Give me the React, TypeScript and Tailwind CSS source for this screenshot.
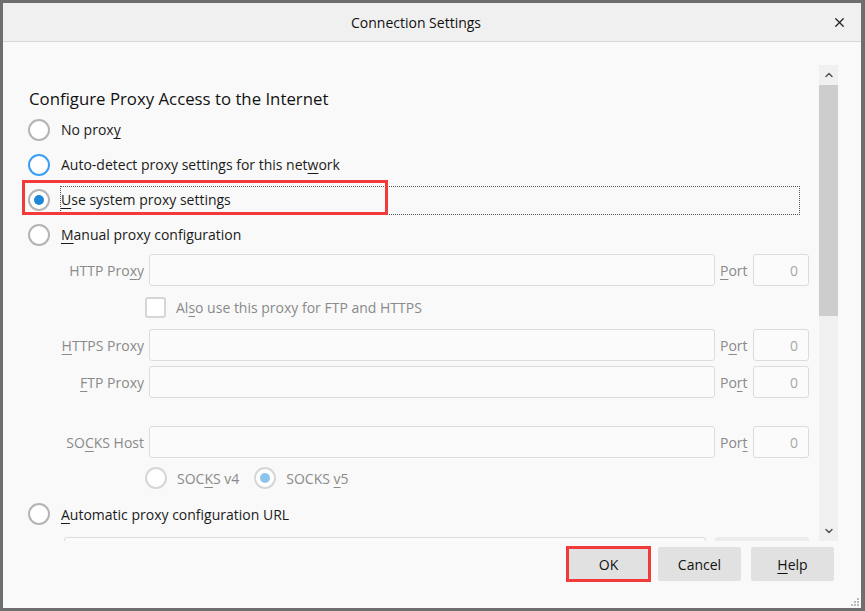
import { X, ChevronUp, ChevronDown } from "lucide-react"
import type { ReactNode } from "react"

const FONT = "font-['Open_Sans',sans-serif]"

// underlined access key letter
function K({ children }: { children: ReactNode }) {
    return <span className="underline decoration-1 underline-offset-[3px]">{children}</span>
}

function Radio({ checked, hover, disabled }: { checked?: boolean; hover?: boolean; disabled?: boolean }) {
    const ring = hover ? "border-[#3c9ff5]" : disabled ? "border-[#d6d6d6]" : "border-[#b4b4b4]"
    const dot = disabled ? "bg-[#8cc4ee]" : "bg-[#1e88d8]"
    return (
        <div className={`w-[22px] h-[22px] shrink-0 rounded-full border-2 bg-white flex items-center justify-center ${ring}`}>
            {checked && <div className={`w-[10px] h-[10px] rounded-full ${dot}`} />}
        </div>
    )
}

function Field({ label, port }: { label: ReactNode; port: ReactNode }) {
    return (
        <div className="flex items-center h-[32px]">
            <div className="w-[146px] text-right pr-[5px] text-[#8a8a8a]">{label}</div>
            <div className="w-[566px] h-[32px] rounded-[3px] border border-[#dcdcdc] bg-[#fbfbfb]" />
            <div className="w-[38px] pl-[5px] text-[#8a8a8a]">{port}</div>
            <div className="w-[56px] h-[32px] rounded-[3px] border border-[#dcdcdc] bg-[#fbfbfb] flex items-center justify-end pr-[10px] text-[#a8a8a8]">
                0
            </div>
        </div>
    )
}

const OPTIONS = [
    { id: "none", label: <>No prox<K>y</K></> },
    { id: "auto", label: <>Auto-detect proxy settings for this net<K>w</K>ork</>, hover: true },
    { id: "system", label: <><K>U</K>se system proxy settings</>, checked: true },
    { id: "manual", label: <><K>M</K>anual proxy configuration</> },
]

export default function App() {
    return (
        <div className={`w-[865px] h-[611px] bg-[#6e6e6e] pt-[3px] pl-[3px] pr-[4px] pb-[3px] ${FONT} text-[14px] text-[#1b1b1b]`}>
            <div className="w-full h-full bg-[#f9f9f9] flex flex-col relative">
                {/* Title bar */}
                <header className="h-[39px] shrink-0 bg-[#f0f0f0] border-b border-[#d8d8d8] flex items-center pr-[32px] relative">
                    <div className="flex-1 text-center text-[14px] text-[#111]">Connection Settings</div>
                    <X className="absolute right-[14px] top-[12px] w-[15px] h-[15px] text-[#222]" strokeWidth={2} />
                </header>

                {/* Body */}
                <div className="flex pt-[23px] pr-[23px] h-[499px] shrink-0">
                    <div className="flex-1 h-[476px] overflow-hidden">
                        <h1 className="mt-[23px] pl-[26px] text-[16.8px] leading-[22px] text-[#111]">Configure Proxy Access to the Internet</h1>

                        <div className="mt-[2px]">
                            {OPTIONS.map((o) => (
                                <div key={o.id} className="h-[35px] flex items-center pl-[25px] relative">
                                    <Radio checked={o.checked} hover={o.hover} />
                                    <span className="ml-[11px]">{o.label}</span>
                                    {o.checked && (
                                        <>
                                            <div className="absolute left-[57px] top-[4px] w-[740px] h-[29px] border border-dotted border-[#555]" />
                                            <div className="absolute left-[19px] top-[-2px] w-[366px] h-[35px] border-[3px] border-[#f23a3a]" />
                                        </>
                                    )}
                                </div>
                            ))}
                        </div>

                        <div className="mt-[2px]">
                            <Field label={<>HTTP Pro<K>x</K>y</>} port={<><K>P</K>ort</>} />
                        </div>
                        <div className="h-[43px] flex items-center pl-[142px]">
                            <div className="w-[21px] h-[21px] rounded-[3px] border-2 border-[#d6d6d6] bg-white" />
                            <span className="ml-[10px] text-[#8a8a8a]">Al<K>s</K>o use this proxy for FTP and HTTPS</span>
                        </div>
                        <Field label={<><K>H</K>TTPS Proxy</>} port={<>P<K>o</K>rt</>} />
                        <div className="mt-[5px]">
                            <Field label={<><K>F</K>TP Proxy</>} port={<>Po<K>r</K>t</>} />
                        </div>
                        <div className="mt-[28px]">
                            <Field label={<>SO<K>C</K>KS Host</>} port={<>Por<K>t</K></>} />
                        </div>
                        <div className="h-[40px] flex items-center pl-[142px] text-[#8a8a8a]">
                            <Radio disabled />
                            <span className="ml-[10px]">SOC<K>K</K>S v4</span>
                            <div className="ml-[15px]"><Radio disabled checked /></div>
                            <span className="ml-[10px]">SOCKS <K>v</K>5</span>
                        </div>
                        <div className="h-[32px] flex items-center pl-[25px]">
                            <Radio />
                            <span className="ml-[11px]"><K>A</K>utomatic proxy configuration URL</span>
                        </div>
                        <div className="mt-[7px] flex pl-[61px]">
                            <div className="w-[642px] h-[32px] rounded-[3px] border border-[#dcdcdc] bg-[#fbfbfb]" />
                            <div className="ml-[9px] w-[94px] h-[32px] rounded-[3px] bg-[#ececec]" />
                        </div>
                    </div>

                    {/* Scrollbar */}
                    <div className="w-[19px] h-[476px] bg-[#f0f0f0] flex flex-col">
                        <div className="h-[20px] flex items-center justify-center">
                            <ChevronUp className="w-[12px] h-[12px] text-[#555]" strokeWidth={3} />
                        </div>
                        <div className="h-[231px] bg-[#cdcdcd]" />
                        <div className="flex-1" />
                        <div className="h-[21px] flex items-center justify-center">
                            <ChevronDown className="w-[12px] h-[12px] text-[#555]" strokeWidth={3} />
                        </div>
                    </div>
                </div>

                {/* Footer */}
                <footer className="flex justify-end items-start pt-[5px] pr-[27px] gap-[7px]">
                    <button className="w-[85px] h-[36px] border-[3px] border-[#f23a3a] bg-[#e1e1e1] text-[#111]">OK</button>
                    <button className="mt-[1px] w-[83px] h-[34px] rounded-[2px] bg-[#e1e1e1] text-[#111]">Cancel</button>
                    <button className="ml-[3px] mt-[1px] w-[83px] h-[34px] rounded-[2px] bg-[#e1e1e1] text-[#111]"><K>H</K>elp</button>
                </footer>

                {/* resize grip */}
                <svg className="absolute right-[2px] bottom-[2px]" width="10" height="10" viewBox="0 0 10 10">
                    {[[8, 2], [8, 5], [5, 5], [8, 8], [5, 8], [2, 8]].map(([x, y]) => (
                        <rect key={`${x}-${y}`} x={x} y={y} width="2" height="2" fill="#b9b9b9" />
                    ))}
                </svg>
            </div>
        </div>
    )
}
